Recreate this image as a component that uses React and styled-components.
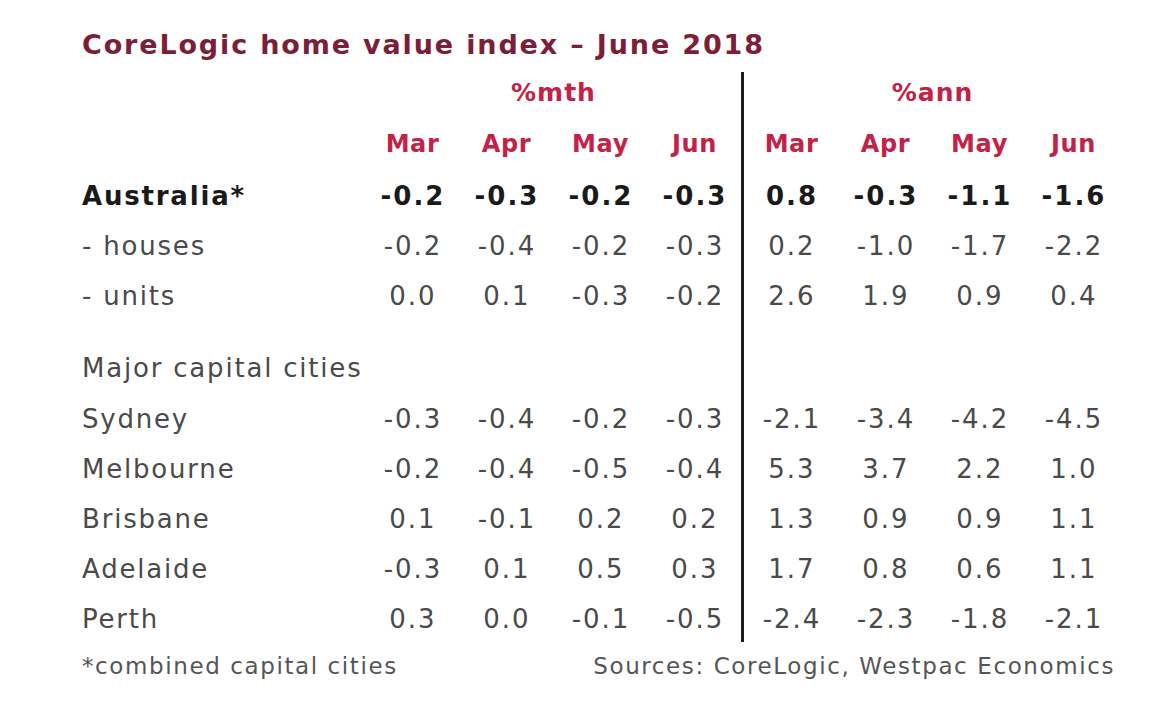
import React from "react";
import styled, { createGlobalStyle } from "styled-components";

const GlobalStyle = createGlobalStyle`
  html, body {
    margin: 0;
    padding: 0;
    background: #ffffff;
  }
  body {
    font-family: "DejaVu Sans", "Noto Sans", sans-serif;
  }
`;

const Page = styled.div`
  width: 1160px;
  height: 704px;
  box-sizing: border-box;
  padding: 28px 0 0 82px;
  background: #fff;
  overflow: hidden;
`;

const Title = styled.h1`
  margin: 0;
  height: 39px;
  font-size: 27px;
  font-weight: 600;
  line-height: 34px;
  color: #7c1e38;
  letter-spacing: 1.85px;
`;

const Table = styled.div`
  display: grid;
  grid-template-columns: 283px repeat(4, 94px) 3px repeat(4, 94px);
  grid-template-rows: 50px 54px 50px 50px 50px 73px 50px 50px 50px 50px 50px 44px;
`;

const Divider = styled.div`
  grid-column: 6;
  grid-row: 1 / 12;
  background: #1c1c1c;
  margin: 5px 0 2px;
`;

const GroupHead = styled.div`
  grid-column: ${(p) => p.$col};
  grid-row: 1;
  display: flex;
  align-items: center;
  justify-content: center;
  padding-left: 1px;
  font-size: 25px;
  font-weight: 600;
  letter-spacing: 1px;
  color: #c42147;
`;

const Cell = styled.div`
  grid-column: ${(p) => p.$col};
  grid-row: ${(p) => p.$row};
  display: flex;
  align-items: ${(p) => (p.$bottom ? "flex-end" : "center")};
  padding-bottom: ${(p) => (p.$bottom ? "11px" : "0")};
  padding-left: ${(p) => (p.$label ? "0" : "2px")};
  justify-content: ${(p) => (p.$label ? "flex-start" : "center")};
  font-size: 26px;
  font-weight: ${(p) => (p.$bold ? 700 : 400)};
  color: ${(p) => (p.$bold ? "#1a1a1a" : "#4a4a4a")};
  white-space: nowrap;
  letter-spacing: ${(p) => (p.$label ? "1.8px" : "2px")};
`;

const MonthCell = styled(Cell)`
  font-size: 24px;
  font-weight: 600;
  letter-spacing: 0.6px;
  padding-left: 1px;
  color: #c42147;
`;

const Footer = styled.div`
  grid-column: 1 / -1;
  grid-row: 12;
  display: flex;
  align-items: center;
  justify-content: space-between;
  padding-right: 5px;
  font-size: 23px;
  letter-spacing: 1.6px;
  color: #555;
`;

const months = ["Mar", "Apr", "May", "Jun"];

const rows = [
  { label: "Australia*", bold: true, vals: ["-0.2", "-0.3", "-0.2", "-0.3", "0.8", "-0.3", "-1.1", "-1.6"] },
  { label: "- houses", vals: ["-0.2", "-0.4", "-0.2", "-0.3", "0.2", "-1.0", "-1.7", "-2.2"] },
  { label: "- units", vals: ["0.0", "0.1", "-0.3", "-0.2", "2.6", "1.9", "0.9", "0.4"] },
  { label: "Major capital cities", bottom: true, vals: [] },
  { label: "Sydney", vals: ["-0.3", "-0.4", "-0.2", "-0.3", "-2.1", "-3.4", "-4.2", "-4.5"] },
  { label: "Melbourne", vals: ["-0.2", "-0.4", "-0.5", "-0.4", "5.3", "3.7", "2.2", "1.0"] },
  { label: "Brisbane", vals: ["0.1", "-0.1", "0.2", "0.2", "1.3", "0.9", "0.9", "1.1"] },
  { label: "Adelaide", vals: ["-0.3", "0.1", "0.5", "0.3", "1.7", "0.8", "0.6", "1.1"] },
  { label: "Perth", vals: ["0.3", "0.0", "-0.1", "-0.5", "-2.4", "-2.3", "-1.8", "-2.1"] },
];

// data columns skip the divider at grid column 6
const colFor = (i) => (i < 4 ? i + 2 : i + 3);

const App = () => (
  <>
    <GlobalStyle />
    <Page>
      <Title>CoreLogic home value index – June 2018</Title>
      <Table>
        <GroupHead $col="2 / 6">%mth</GroupHead>
        <GroupHead $col="7 / 11">%ann</GroupHead>
        <Divider />
        {[...months, ...months].map((m, i) => (
          <MonthCell key={`m${i}`} $col={colFor(i)} $row={2}>
            {m}
          </MonthCell>
        ))}
        {rows.map((r, ri) => (
          <React.Fragment key={r.label}>
            <Cell $label $col={1} $row={ri + 3} $bold={r.bold} $bottom={r.bottom}>
              {r.label}
            </Cell>
            {r.vals.map((v, vi) => (
              <Cell key={vi} $col={colFor(vi)} $row={ri + 3} $bold={r.bold}>
                {v}
              </Cell>
            ))}
          </React.Fragment>
        ))}
        <Footer>
          <span>*combined capital cities</span>
          <span>Sources: CoreLogic, Westpac Economics</span>
        </Footer>
      </Table>
    </Page>
  </>
);

export default App;
